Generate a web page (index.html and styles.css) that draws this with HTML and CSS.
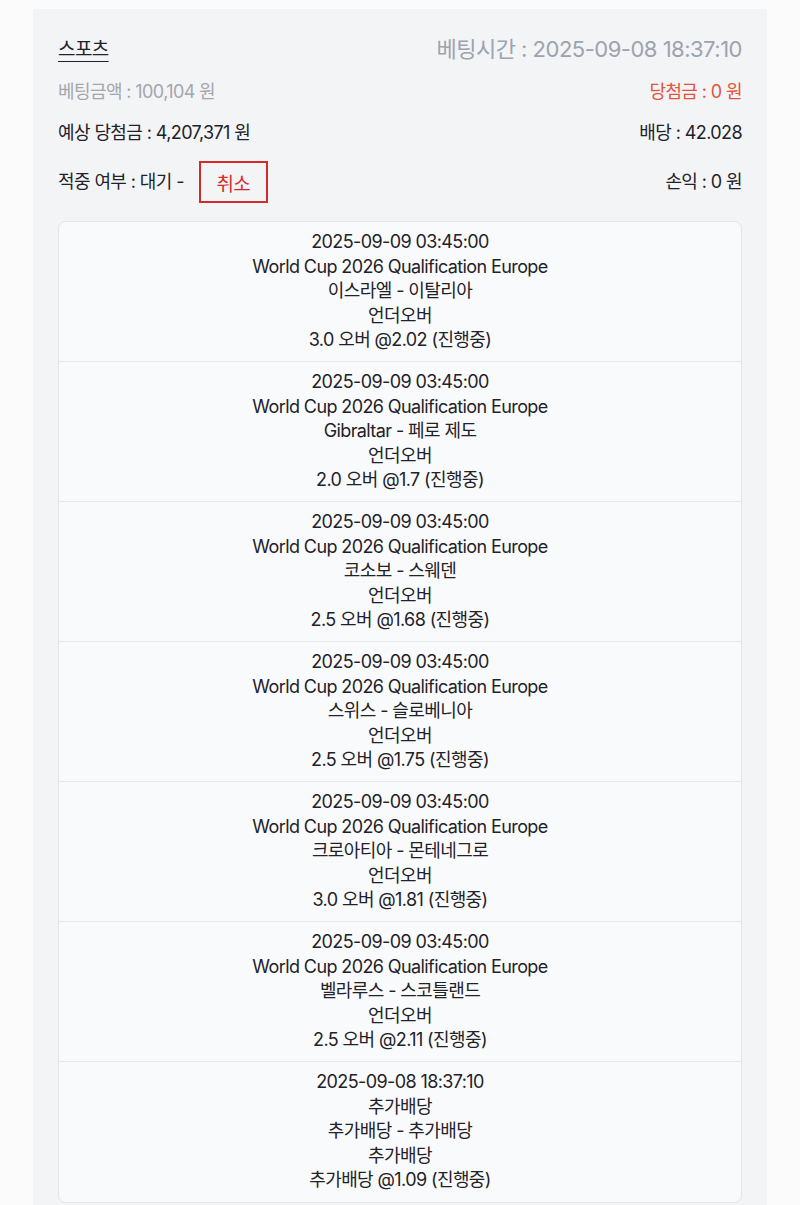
FILE: index.html
```html
<!DOCTYPE html>
<html lang="ko">
<head>
  <meta charset="UTF-8" />
  <meta name="viewport" content="width=device-width, initial-scale=1.0" />
  <title>베팅내역</title>
  <link rel="stylesheet" href="styles.css">
</head>
<body>
  <div class="bet-box">
    <div class="bet-head">
      <span class="bet-type">스포츠</span>
      <span class="bet-time">베팅시간 : 2025-09-08 18:37:10</span>
    </div>

    <div class="bet-row">
      <span class="muted">베팅금액 : 100,104 원</span>
      <span class="win">당첨금 : 0 원</span>
    </div>

    <div class="bet-row">
      <span>예상 당첨금 : 4,207,371 원</span>
      <span>배당 : 42.028</span>
    </div>

    <div class="bet-row status-row">
      <span class="status">적중 여부 : 대기 - <button class="btn-cancel">취소</button></span>
      <span>손익 : 0 원</span>
    </div>

    <div class="games">
      <div class="game">
        <div>2025-09-09 03:45:00</div>
        <div>World Cup 2026 Qualification Europe</div>
        <div>이스라엘 - 이탈리아</div>
        <div>언더오버</div>
        <div>3.0 오버 @2.02 (진행중)</div>
      </div>
      <div class="game">
        <div>2025-09-09 03:45:00</div>
        <div>World Cup 2026 Qualification Europe</div>
        <div>Gibraltar - 페로 제도</div>
        <div>언더오버</div>
        <div>2.0 오버 @1.7 (진행중)</div>
      </div>
      <div class="game">
        <div>2025-09-09 03:45:00</div>
        <div>World Cup 2026 Qualification Europe</div>
        <div>코소보 - 스웨덴</div>
        <div>언더오버</div>
        <div>2.5 오버 @1.68 (진행중)</div>
      </div>
      <div class="game">
        <div>2025-09-09 03:45:00</div>
        <div>World Cup 2026 Qualification Europe</div>
        <div>스위스 - 슬로베니아</div>
        <div>언더오버</div>
        <div>2.5 오버 @1.75 (진행중)</div>
      </div>
      <div class="game">
        <div>2025-09-09 03:45:00</div>
        <div>World Cup 2026 Qualification Europe</div>
        <div>크로아티아 - 몬테네그로</div>
        <div>언더오버</div>
        <div>3.0 오버 @1.81 (진행중)</div>
      </div>
      <div class="game">
        <div>2025-09-09 03:45:00</div>
        <div>World Cup 2026 Qualification Europe</div>
        <div>벨라루스 - 스코틀랜드</div>
        <div>언더오버</div>
        <div>2.5 오버 @2.11 (진행중)</div>
      </div>
      <div class="game">
        <div>2025-09-08 18:37:10</div>
        <div>추가배당</div>
        <div>추가배당 - 추가배당</div>
        <div>추가배당</div>
        <div>추가배당 @1.09 (진행중)</div>
      </div>
    </div>
  </div>
</body>
</html>
```

FILE: styles.css
```css
body {
  margin: 0;
  padding: 9px 33px 0;
  background: #fbfbfc;
  color: #1f2228;
  font-family: Inter, "Noto Sans CJK KR", sans-serif;
  font-size: 18px;
  letter-spacing: -0.6px;
}

.bet-box {
  background: #f3f4f6;
  padding: 22px 25px 10px;
}

.bet-head, .bet-row {
  display: flex;
  justify-content: space-between;
  align-items: center;
}

.bet-type {
  font-size: 19px;
  text-decoration: underline;
  text-decoration-thickness: 1px;
  text-underline-offset: 5px;
}

.bet-time {
  font-size: 22px;
  color: #9ca3af;
  letter-spacing: -0.5px;
}

.bet-row {
  margin-top: 17px;
  line-height: 24px;
}

.muted {
  color: #a3a6ab;
}

.win {
  color: #e5533d;
}

.status-row {
  margin-top: 16px;
}

.status {
  display: flex;
  align-items: center;
}

.btn-cancel {
  margin-left: 15px;
  width: 69px;
  height: 42px;
  border: 2px solid #d52b2b;
  background: transparent;
  color: #d52b2b;
  font-family: inherit;
  font-size: 19px;
  letter-spacing: -0.6px;
  cursor: pointer;
}

.games {
  margin-top: 18px;
  background: #f9fafb;
  border: 1px solid #e3e5e9;
  border-radius: 8px;
}

.game {
  height: 140px;
  box-sizing: border-box;
  padding: 8px 0;
  text-align: center;
  line-height: 24.5px;
  border-bottom: 1px solid #e6e8ec;
}

.game:last-child {
  border-bottom: none;
}
```
